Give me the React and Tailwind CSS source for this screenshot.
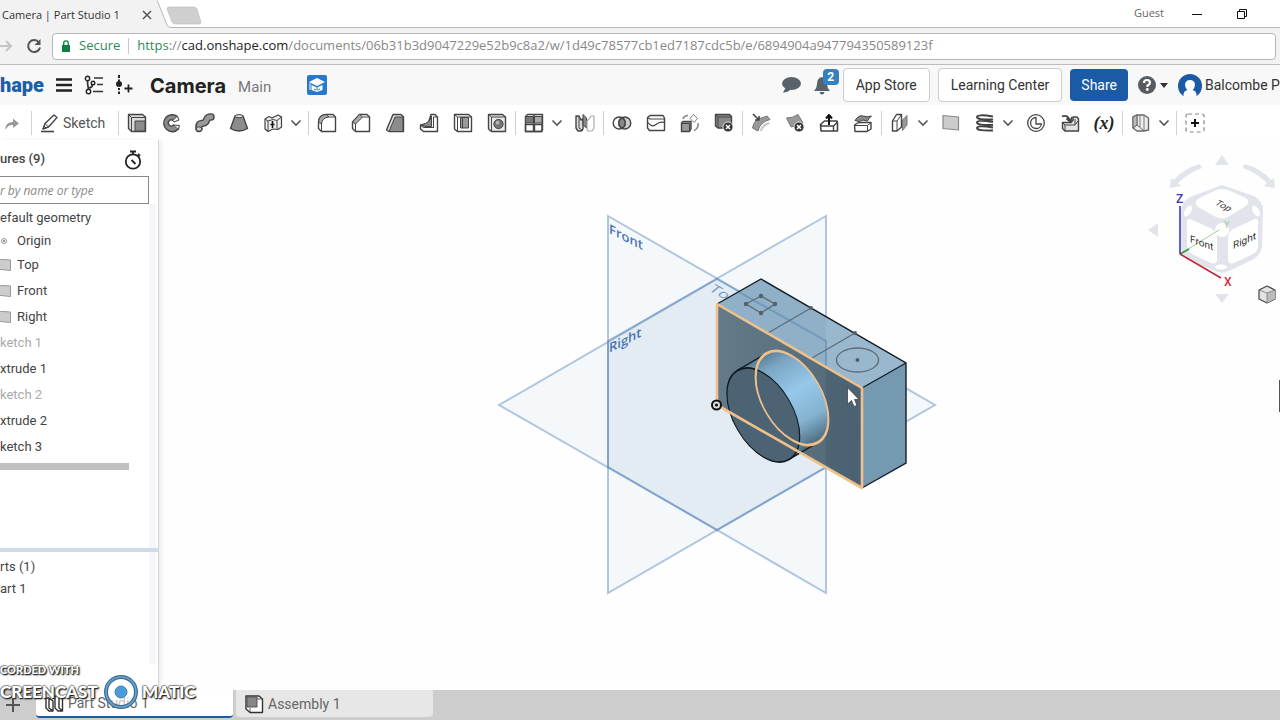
import React from "react";

const Icon = ({ children, className = "size-5" }) => (
  <svg viewBox="0 0 20 20" className={className} fill="none" stroke="#444" strokeWidth="1.4" strokeLinejoin="round" aria-hidden="true">
    {children}
  </svg>
);

const icons = {
  Extrude: (
    <Icon>
      <path d="M1.5 1.5H15.5L18.5 4V18.5H4.5L1.5 15.5Z" fill="#dcdcdc" />
      <path d="M1.5 1.5L4.5 4.5H18.5M4.5 4.5V18.5" strokeWidth="1" />
      <path d="M8 8H18V18H8Z" fill="#8c8c8c" strokeWidth="1" />
    </Icon>
  ),
  Revolve: (
    <Icon>
      <path d="M16.500 3.500A8.500 8.500 0 1 0 17.500 16L12.500 12A3 3 0 1 1 12 7.500Z" fill="#8c8c8c" />
      <path d="M16.500 3.500L18 7L13 9L12 7.500M12.500 12L18.500 12.500L17.500 16" fill="#eee" strokeWidth="1" />
    </Icon>
  ),
  Sweep: (
    <Icon>
      <path d="M4 15.500C3 8 8 12 10.500 9S11 4 16 4" strokeWidth="7.500" strokeLinecap="round" />
      <path d="M4 15.500C3 8 8 12 10.500 9S11 4 16 4" stroke="#999" strokeWidth="4.800" strokeLinecap="round" />
      <ellipse cx="4" cy="16" rx="2.800" ry="2.200" fill="#ccc" strokeWidth="1" />
    </Icon>
  ),
  Loft: (
    <Icon>
      <path d="M6 3L1.500 15.500Q10 20.500 18.500 15.500L14 3Z" fill="#8c8c8c" />
      <ellipse cx="10" cy="3.200" rx="4" ry="1.600" fill="#ddd" strokeWidth="1" />
    </Icon>
  ),
  Thicken: (
    <Icon>
      <path d="M2 6L6 3.500L9 5L15 2L18.500 4V14L15 16.500L10 16L5 18.500L2 16Z" fill="#eee" strokeWidth="1.200" />
      <path d="M2 6L5 8L10 6.500L14 7.500L18.500 4M5 8V18.500M14 7.500V16" strokeWidth="1" />
      <path d="M9.500 8V15M7.500 11.500H11.500" stroke="#111" strokeWidth="1.600" />
    </Icon>
  ),
  Fillet: (
    <Icon>
      <path d="M1.500 15.500V9Q2 2 9 1.500H16L18.500 4V18.500H4.500Z" fill="#fff" />
      <path d="M1.500 9Q2 2 9 1.500L12 4Q5 4.500 4.500 11Z" fill="#aaa" strokeWidth="1" />
      <path d="M4.500 18.500V11M12 4H18.500" strokeWidth="1" />
    </Icon>
  ),
  Chamfer: (
    <Icon>
      <path d="M1.500 15.500V9L8.500 1.500H16L18.500 4V18.500H4.500Z" fill="#fff" />
      <path d="M1.500 9L8.500 1.500L11.500 4L4.500 11Z" fill="#aaa" strokeWidth="1" />
      <path d="M4.500 18.500V11M11.500 4H18.500" strokeWidth="1" />
    </Icon>
  ),
  Draft: (
    <Icon>
      <path d="M1.500 17L8 1.500H16L18.500 4V18.500H4Z" fill="#ddd" />
      <path d="M4 18.500L10 4H18V18.500Z" fill="#8c8c8c" strokeWidth="1" />
    </Icon>
  ),
  Rib: (
    <Icon>
      <path d="M1.500 12L9 11L12 1.500H16L18.500 4V18.500H4.500L1.500 16Z" fill="#fff" />
      <path d="M3 11.500Q11 10 12.500 3V13.500H6Z" fill="#888" strokeWidth="1" />
      <path d="M1.500 12L5 14.500H14.500V4H18" strokeWidth="1.100" />
    </Icon>
  ),
  Shell: (
    <Icon>
      <path d="M1.500 1.500H15.500L18.500 4V18.500H4.500L1.500 16Z" fill="#fff" />
      <path d="M1.500 1.500L4.500 4H18.500M4.500 4V18.500" strokeWidth="1" />
      <path d="M7.500 4.500H15.500V15H7.500Z" fill="#999" strokeWidth="1" />
      <path d="M9.500 4.500V15" strokeWidth="1" />
    </Icon>
  ),
  Hole: (
    <Icon>
      <path d="M1.500 1.500H15.500L18.500 4V18.500H4.500L1.500 16Z" fill="#e8e8e8" />
      <path d="M1.500 1.500L4.500 4H18.500M4.500 4V18.500" strokeWidth="1" />
      <circle cx="11.500" cy="11" r="4.600" fill="#777" strokeWidth="1" />
      <circle cx="10.500" cy="9.800" r="1.800" fill="#bbb" stroke="none" />
    </Icon>
  ),
  "Linear pattern": (
    <Icon>
      <path d="M1.500 3.500L3.500 1.500H18.500V17L17 18.500H1.500Z" fill="#fff" />
      <path d="M1.500 3.500H9.500V10H1.500Z" fill="#777" strokeWidth="1" />
      <path d="M10.500 3.500H18V10H10.500Z" fill="#aaa" strokeWidth="1" />
      <path d="M1.500 11.500H9.500V18.500H1.500ZM10.500 11.500H18V18.500H10.500ZM10 1.500V18.500" />
    </Icon>
  ),
  Mirror: (
    <Icon>
      <path d="M1 3H4L6 7L8 6V16L6 18H3L1 15Z" fill="#ddd" />
      <path d="M4 3V15L8 18" strokeWidth="1" />
      <path d="M8 1.500L11.500 5V15L8 12Z" fill="#888" strokeWidth="1" />
      <path d="M12 8L14 6L16 3H19V15L17 18H13L12 16Z" stroke="#aaa" strokeWidth="1.200" />
    </Icon>
  ),
  Boolean: (
    <Icon>
      <circle cx="12.800" cy="10" r="6" fill="#ccc" />
      <circle cx="7.200" cy="10" r="6" />
      <path d="M10 4.700A6 6 0 0 1 10 15.300A6 6 0 0 1 10 4.700Z" fill="#888" />
    </Icon>
  ),
  Split: (
    <Icon>
      <path d="M1.500 4.500L4 2.500H17L18.500 5V17.500H3.500L1.500 15Z" fill="#fff" />
      <path d="M1.500 4.500L4 6H18M1.500 9Q6 15 10 11.500T18.500 9.500V6.500" strokeWidth="1.200" />
    </Icon>
  ),
  Transform: (
    <Icon>
      <path d="M1.500 10L3 8.500H11V16L9.500 18.500H1.500Z" fill="#999" />
      <path d="M1.500 10.500H9.500V18" strokeWidth="1" />
      <path d="M10 5.500L13.500 1.500L17.500 5.500L14 9.500Z" fill="#fff" stroke="#777" strokeWidth="1" />
      <path d="M3 6Q4 2.500 8 2.500M18 10Q19 15 14 17.500" stroke="#888" strokeWidth="1.600" />
    </Icon>
  ),
  "Delete part": (
    <Icon>
      <path d="M1.500 1.500H15.500L17.500 3.500V15H4L1.500 13Z" fill="#888" />
      <path d="M1.500 1.500L4 4H17.500M4 4V15" strokeWidth="1" />
      <circle cx="14" cy="14" r="5" fill="#333" stroke="#fff" strokeWidth=".8" />
      <path d="M12 12L16 16M16 12L12 16" stroke="#fff" strokeWidth="1.600" />
    </Icon>
  ),
  "Modify fillet": (
    <Icon>
      <path d="M1.500 15Q3 6 12 4.500L16 3L19 6.500Q9 9 7 18Z" fill="#999" stroke="#777" strokeWidth="1" />
      <path d="M10 18Q11 12 18.500 10" stroke="#ccc" strokeWidth="2.500" />
      <path d="M2 1L7.500 6.500M8 3V7H4" strokeWidth="1.600" />
    </Icon>
  ),
  "Delete face": (
    <Icon>
      <path d="M1.500 5Q8 5 13 1.500L18 10Q13 13 6 14Z" fill="#999" stroke="#777" strokeWidth="1" />
      <circle cx="14" cy="14" r="5" fill="#333" stroke="#fff" strokeWidth=".8" />
      <path d="M12 12L16 16M16 12L12 16" stroke="#fff" strokeWidth="1.600" />
    </Icon>
  ),
  "Move face": (
    <Icon>
      <path d="M1.500 11.500L5.500 8H18L18.500 10V18H2Z" fill="#fff" strokeWidth="1.600" />
      <path d="M1.500 11.500L3 13H14.500L18.500 9M14.500 13V18" />
      <path d="M10 12V3M7 5.500L10 2L13 5.500" stroke="#111" strokeWidth="2" />
    </Icon>
  ),
  "Replace face": (
    <Icon>
      <path d="M1.500 12L5.500 9.500H18V16L14 18.500H2Z" fill="#fff" />
      <path d="M1.500 12.500H14.500L18 9.500M14.500 12.500V18" strokeWidth="1" />
      <path d="M2 7.500Q6 1.500 10 3T18.500 3Q16 5 14.500 8Q10 6 6 8.500Z" fill="#888" strokeWidth="1" />
    </Icon>
  ),
  "Offset surface": (
    <Icon>
      <path d="M2.500 8L6.500 1.500H11.500V14L7 18H2.500Z" fill="#fff" />
      <path d="M7 8L11.500 1.500M7 8V18M2.500 8H7" strokeWidth="1" />
      <path d="M12.500 7L17 2.500V12L12.500 17.500Z" fill="#999" stroke="#777" strokeWidth="1" />
    </Icon>
  ),
  Plane: (
    <Icon>
      <path d="M2 2.500L17.500 4V17L2 15.500Z" fill="#ccc" stroke="#888" strokeWidth="1.200" />
    </Icon>
  ),
  Helix: (
    <Icon>
      <path d="M18 3.500Q2 1 2 4T18 6.500M18 9Q2 6.500 2 9.500T18 12M18 14.500Q2 12 2 15T18 17.500" strokeWidth="2" />
    </Icon>
  ),
  Curve: (
    <Icon>
      <circle cx="10" cy="10" r="8.300" strokeWidth="1.300" />
      <path d="M10 4.500A5.500 5.500 0 1 0 15.500 11H10Z" strokeWidth="1.300" />
    </Icon>
  ),
  Import: (
    <Icon>
      <path d="M2.500 9.500H11L13 7V4H17L18.500 6V18H5L2.500 15.500Z" fill="#e4e4e4" />
      <path d="M2.500 9.500L5 12H15V6M5 12V18M15 12L18 8" strokeWidth="1" />
      <path d="M2 3.500Q8 1 10 8M6.500 5.500L10.500 9L12 4" strokeWidth="1.800" />
    </Icon>
  ),
  Variable: <span className="font-['Liberation_Serif',serif] text-lg font-bold italic text-[#222]">(x)</span>,
  "Section view": (
    <Icon>
      <path d="M2 4L6 2H13L17.500 5V17L13 18H6L2 15Z" fill="#eee" stroke="#666" />
      <path d="M6 2V12L2 15M6 12L13 18" stroke="#666" strokeWidth="1" />
      <path d="M2 4L6 2V12L2 15Z" fill="#bbb" stroke="#666" strokeWidth="1" />
      <path d="M9 2V14M13 2V18" stroke="#777" strokeWidth="1" />
    </Icon>
  ),
  "Add custom features": (
    <Icon>
      <rect x="1" y="1" width="18" height="18" rx="2" stroke="#888" strokeWidth="1.200" strokeDasharray="4 3" />
      <path d="M10 6V14M6 10H14" stroke="#111" strokeWidth="2" />
    </Icon>
  ),
};

const toolGroups = [
  ["Extrude", "Revolve", "Sweep", "Loft", "Thicken", "v"],
  ["Fillet", "Chamfer", "Draft", "Rib", "Shell", "Hole"],
  ["Linear pattern", "v", "Mirror"],
  ["Boolean", "Split", "Transform", "Delete part"],
  ["Modify fillet", "Delete face", "Move face", "Replace face"],
  ["Offset surface", "v", "Plane", "Helix", "v", "Curve", "Import", "Variable"],
  ["Section view", "v"],
  ["Add custom features"],
];

const Divider = () => <span className="mx-px h-6 w-px shrink-0 bg-[#d2d2d2]" />;

function BrowserChrome() {
  return (
    <>
      <div className="flex h-7 items-stretch bg-white font-['Open_Sans',sans-serif]">
        <div className="flex w-[157px] items-center justify-between bg-[#f2f2f2] pl-0.5 pr-1 pt-0.5">
          <span className="whitespace-nowrap text-[11px] text-[#333]">Camera | Part Studio 1</span>
          <button aria-label="Close tab">
            <svg viewBox="0 0 12 12" className="size-3" stroke="#555" strokeWidth="1.5">
              <path d="M2 2L10 10M10 2L2 10" />
            </svg>
          </button>
        </div>
        <svg viewBox="0 0 46 28" className="h-7 w-[46px]" aria-hidden="true">
          <path d="M0 0L11 26Q12 28 14 28H0Z" fill="#f2f2f2" />
          <path d="M0 0L10 25Q11 27.500 14 27.500H46" fill="none" stroke="#b8b8b8" />
          <path d="M12 7H37Q39 7 40 9L44 22Q44 24 42 24H18Q16 24 15 22L10 9Q10 7 12 7Z" fill="#cfcfcf" stroke="#bbb" strokeWidth=".6" />
        </svg>
        <div className="flex flex-1 items-center justify-end gap-[27px] border-b border-[#b8b8b8] pr-8">
          <span className="text-[11px] text-[#666]">Guest</span>
          <button aria-label="Minimize">
            <svg viewBox="0 0 12 12" className="size-3" stroke="#111">
              <path d="M1 6.500H11" />
            </svg>
          </button>
          <button aria-label="Restore" className="pl-1.5">
            <svg viewBox="0 0 12 12" className="size-3" fill="none" stroke="#111">
              <path d="M1.500 3.500H8.500V10.500H1.500ZM3.500 3V1.500H10.500V8.500H9" />
            </svg>
          </button>
        </div>
      </div>
      <div className="flex h-[37px] items-center border-b border-[#bdbdbd] bg-[#f2f2f2] pb-1 pr-1 pt-1 font-['Open_Sans',sans-serif]">
        <button aria-label="Forward" className="w-[22px]">
          <svg viewBox="0 0 22 16" className="h-4 w-[22px]" fill="none" stroke="#c4c4c4" strokeWidth="2">
            <path d="M0 8H11M6 3L11 8L6 13" />
          </svg>
        </button>
        <button aria-label="Reload" className="mr-2.5 pl-1">
          <svg viewBox="0 0 16 16" className="size-4" fill="none" stroke="#555" strokeWidth="2">
            <path d="M13 4.500A6 6 0 1 0 14 9.500" />
            <path d="M14.500 1V7H8.500Z" fill="#555" stroke="none" />
          </svg>
        </button>
        <div className="flex h-[27px] min-w-0 flex-1 items-center whitespace-nowrap rounded-sm border border-[#b5b5b5] bg-white pl-2 text-[13px]">
          <svg viewBox="0 0 10 12" className="mr-2 h-3 w-2.5" aria-hidden="true">
            <path d="M1 5H9V12H1Z" fill="#0b8043" />
            <path d="M2.700 5V3.200a2.300 2.300 0 0 1 4.600 0V5" fill="none" stroke="#0b8043" strokeWidth="1.300" />
          </svg>
          <span className="text-[#2e8b57]">Secure</span>
          <span className="mx-2 h-4 w-px bg-[#c8c8c8]" />
          <span className="text-[#888]">
            <span className="text-[#2e8b57]">https</span>://<span className="text-[#222]">cad.onshape.com</span>
            /documents/06b31b3d9047229e52b9c8a2/w/1d49c78577cb1ed7187cdc5b/e/6894904a947794350589123f
          </span>
        </div>
      </div>
    </>
  );
}

function Header() {
  return (
    <header className="flex h-10 items-center justify-between bg-[#f8f8f8] text-sm text-[#333]">
      <div className="flex items-center">
        <a href="#home" className="flex w-11 justify-end whitespace-nowrap text-xl leading-6 font-black text-[#1b5faa]">
          shape
        </a>
        <button aria-label="Menu" className="ml-3">
          <svg viewBox="0 0 16 16" className="size-4" stroke="#222" strokeWidth="2.600">
            <path d="M0 2.500H16M0 8H16M0 13.500H16" />
          </svg>
        </button>
        <button aria-label="Versions and history" className="ml-3">
          <Icon>
            <circle cx="3.500" cy="3.500" r="2.200" stroke="#222" />
            <circle cx="4.500" cy="16.500" r="2.200" stroke="#222" />
            <circle cx="9" cy="8" r="1.800" stroke="#222" />
            <path d="M3.500 6Q3.500 10 4.500 14M8.500 10Q8 12.500 5 13M10 3H19M13 9.500H19M9 16.500H19" stroke="#333" strokeWidth="1.700" />
          </Icon>
        </button>
        <button aria-label="Create version" className="ml-2.5">
          <Icon>
            <circle cx="5" cy="9" r="3" fill="#222" stroke="none" />
            <path d="M5 0V3M5 4.500V6M5 13V15M5 16.500V19" stroke="#222" strokeWidth="2" />
            <path d="M14.500 9.500V17.500M10.500 13.500H18.500" stroke="#222" strokeWidth="1.800" />
          </Icon>
        </button>
        <h1 className="ml-4 pt-0.5 font-['Inter',sans-serif] text-xl leading-6 font-bold text-[#222]">Camera</h1>
        <span className="ml-3 pt-1.5 text-[15px] text-[#777]">Main</span>
        <button aria-label="Education plan" className="ml-9">
          <svg viewBox="0 0 20 20" className="size-5">
            <rect width="20" height="20" rx="2" fill="#2878cc" />
            <path d="M10 3L18 7L10 11L2 7Z" fill="#fff" />
            <path d="M4.500 10L10 12.500L15.500 10V15L10 17L4.500 15Z" fill="#fff" />
            <path d="M3 8V15" stroke="#fff" />
            <path d="M10 12V15.500M7 14L9 15M13 14L11 15" stroke="#2878cc" />
          </svg>
        </button>
      </div>
      <div className="flex items-center">
        <button aria-label="Comments">
          <svg viewBox="0 0 20 18" className="h-[18px] w-5" fill="#58626b">
            <ellipse cx="10.500" cy="7.500" rx="9.500" ry="6.500" />
            <path d="M5 11L2 16.500Q7 16.500 10 13Z" />
          </svg>
        </button>
        <button aria-label="Notifications" className="relative ml-3 mr-3">
          <svg viewBox="0 0 18 20" className="h-5 w-[18px]" fill="#58626b">
            <path d="M9 2Q14 3 14 9Q14 13 17 16H1Q4 13 4 9Q4 3 9 2ZM6.500 17H11.500Q11 19.500 9 19.500T6.500 17Z" />
          </svg>
          <span className="absolute -top-1.5 left-2.5 flex h-4 w-4 items-center justify-center rounded-sm bg-[#3580c4] text-xs font-bold text-white">2</span>
        </button>
        <button className="mr-2 h-[34px] rounded border border-[#ccc] bg-white px-3">App Store</button>
        <button className="mr-2 h-[34px] rounded border border-[#ccc] bg-white px-3">Learning Center</button>
        <button className="mr-2.5 h-8 rounded-sm bg-[#1b5aa5] px-[11px] text-white">Share</button>
        <button aria-label="Help" className="flex items-center gap-1">
          <svg viewBox="0 0 18 18" className="size-[18px]">
            <circle cx="9" cy="9" r="9" fill="#555b60" />
            <path d="M6 7Q6 4 9 4T12 6.800Q12 8.300 9.500 9.500V11" fill="none" stroke="#fff" strokeWidth="2.200" />
            <circle cx="9.300" cy="13.500" r="1.400" fill="#fff" />
          </svg>
          <svg viewBox="0 0 8 5" className="h-[5px] w-2" fill="#333">
            <path d="M0 0H8L4 5Z" />
          </svg>
        </button>
        <button className="ml-2.5 flex items-center gap-[3px]">
          <svg viewBox="0 0 24 22" className="h-[22px] w-6">
            <circle cx="12" cy="12" r="12" fill="#1b5aa5" />
            <path d="M5.500 22Q5 17 9.500 16Q7 14 7 10.500Q7.500 6 12 6T17 10.500Q17 14 14.500 16Q19 17 18.500 22Z" fill="#fff" />
          </svg>
          <span className="w-[75px] overflow-hidden whitespace-nowrap text-left">Balcombe Ph</span>
        </button>
      </div>
    </header>
  );
}

function Toolbar() {
  return (
    <div role="toolbar" className="flex h-[35px] items-center bg-white">
      <button aria-label="Redo" className="w-[30px] pl-1">
        <svg viewBox="0 0 16 16" className="size-4">
          <path d="M1.500 15Q1 7 9 7V3.500L15 8.500L9 13V10Q4 9.500 1.500 15Z" fill="#999" />
        </svg>
      </button>
      <Divider />
      <button className="flex w-[84px] items-center gap-[3px] pl-[7px] text-sm text-[#555]">
        <Icon>
          <path d="M3 16L5 10.500L14 2L17 4.500L8.500 14Z" fill="#fff" />
          <path d="M5 10.500L8.500 14M3 16L4 13L6 15Z" strokeWidth="1" />
          <path d="M1 18.500H14" strokeWidth="1.600" />
        </Icon>
        Sketch
      </button>
      {toolGroups.map((group, g) => (
        <React.Fragment key={g}>
          <Divider />
          {group.map((name, i) =>
            name === "v" ? (
              <button key={i} aria-label="More tools" className="flex w-[17px] shrink-0 justify-start">
                <svg viewBox="0 0 12 8" className="h-2 w-3" fill="none" stroke="#555" strokeWidth="1.600">
                  <path d="M1.500 1.500L6 6L10.500 1.500" />
                </svg>
              </button>
            ) : (
              <button key={i} aria-label={name} className="flex w-[34px] shrink-0 justify-center">
                {icons[name]}
              </button>
            )
          )}
        </React.Fragment>
      ))}
    </div>
  );
}

const features = [
  { name: "ketch 1", dim: true },
  { name: "xtrude 1" },
  { name: "ketch 2", dim: true },
  { name: "xtrude 2" },
  { name: "ketch 3" },
];

function FeaturePanel() {
  return (
    <aside className="relative z-10 flex w-[159px] shrink-0 flex-col border-r border-[#d4d4d4] bg-white text-[13px] text-[#444] shadow-[2px_0_4px_rgba(0,0,0,0.08)]">
      <section className="flex h-[408px] flex-col">
        <div className="flex h-9 items-center justify-between pr-4 pt-1">
          <h2 className="pb-0.5 font-medium">ures (9)</h2>
          <button aria-label="Feature timing">
            <svg viewBox="0 0 18 20" className="h-5 w-[18px]" fill="none" stroke="#222" strokeWidth="1.800">
              <circle cx="9" cy="11.500" r="7.200" />
              <path d="M6 1.500H12M9 1.500V4M14 4L16 6" />
              <path d="M7.500 10L11.500 14" />
            </svg>
          </button>
        </div>
        <input
          aria-label="Filter by name or type"
          placeholder="r by name or type"
          className="mr-[9px] h-7 border border-l-0 border-[#888] bg-white font-['Open_Sans',sans-serif] text-xs italic placeholder:text-[#888]"
        />
        <div className="mr-0.5 flex-1 border-r-[7px] border-[#f6f6fa]">
          <p className="flex h-[26px] items-end pb-1 leading-4">efault geometry</p>
          <ul>
            <li className="flex h-[22px] items-center gap-2">
              <svg viewBox="0 0 10 10" className="h-2.5 w-[9px]" fill="none" stroke="#888">
                <circle cx="4.500" cy="5" r="2.800" />
                <circle cx="4.500" cy="5" r=".8" fill="#666" />
              </svg>
              Origin
            </li>
            {["Top", "Front", "Right"].map((p) => (
              <li key={p} className="flex h-[26px] items-center gap-1.5">
                <svg viewBox="0 0 11 12" className="h-3 w-[11px]" aria-hidden="true">
                  <path d="M-4 0L10.500 1V11.500L-4 10Z" fill="#ccc" stroke="#999" />
                </svg>
                {p}
              </li>
            ))}
            {features.map((f) => (
              <li key={f.name} className={f.dim ? "flex h-[26px] items-center text-[#aaa]" : "flex h-[26px] items-center"}>
                {f.name}
              </li>
            ))}
          </ul>
          <div className="mr-5 mt-[3px] h-[7px] bg-[#c0c0c0]" />
        </div>
      </section>
      <div className="h-1 bg-[#cddce6]" />
      <section className="mr-0.5 h-28 border-r-[7px] border-[#f6f6fa] pt-1">
        <h2 className="flex h-[22px] items-center">rts (1)</h2>
        <p className="flex h-[22px] items-center">art 1</p>
      </section>
    </aside>
  );
}

function Model() {
  return (
    <svg viewBox="159 140 1121 550" className="h-full w-full" fill="none" role="img" aria-label="Camera model">
      <defs>
        <linearGradient id="barrel" gradientUnits="userSpaceOnUse" x1="752" y1="362" x2="803" y2="451">
          <stop offset="0" stopColor="#5d7f95" />
          <stop offset=".14" stopColor="#7ba6c3" />
          <stop offset=".45" stopColor="#96c8ea" />
          <stop offset=".75" stopColor="#84b2d0" />
          <stop offset=".92" stopColor="#5f8299" />
          <stop offset="1" stopColor="#4b687b" />
        </linearGradient>
        <linearGradient id="face" gradientUnits="userSpaceOnUse" x1="717" y1="0" x2="862" y2="0">
          <stop offset="0" stopColor="#647a88" />
          <stop offset=".74" stopColor="#566d7c" />
          <stop offset=".76" stopColor="#4c6473" />
          <stop offset="1" stopColor="#4a6271" />
        </linearGradient>
      </defs>
      <g fill="#1f6296" fillOpacity=".04" stroke="#4a7cb8" strokeOpacity=".42" strokeWidth="2">
        <path d="M608 216L826 341V593L608 467Z" />
        <path d="M826 216L608 341V593L826 467Z" />
        <path d="M717 279L935 405L717 530L499 405Z" />
      </g>
      <g fontFamily="Open Sans, sans-serif" fontSize="13" fontWeight="600" fill="#4a74b4">
        <text transform="translate(609 233) skewY(27)">Front</text>
        <text transform="translate(609 353) skewY(-27)">Right</text>
        <text transform="matrix(.87 .5 -.6 .5 708 290)" fontSize="17" fontWeight="400" fill="#7c98c4">Top</text>
      </g>
      <path d="M717 304L761 279L906 363L862 388Z" fill="#9ab8cd" />
      <path d="M717 304L761 279L826 317V367Z" fill="#8fb0c7" />
      <path d="M862 388L906 363V463L862 488Z" fill="#7599b1" />
      <path d="M717 304L862 388V488L717 405Z" fill="url(#face)" />
      <path d="M739 292L826 341V367" stroke="#5482b0" strokeOpacity=".5" strokeWidth="2" />
      <path d="M717 304L761 279L906 363V463L862 488M862 388L906 363" stroke="#151d24" strokeWidth="1.400" />
      <g stroke="#5f6e79" strokeWidth="1.400">
        <path d="M746 304L761 296L775 304L761 313ZM811 308L768 333M855 333L812 358" />
        <ellipse cx="857.500" cy="360" rx="21" ry="12" />
      </g>
      <g fill="#56606a">
        <circle cx="746" cy="304" r="2.200" />
        <circle cx="761" cy="296" r="2.200" />
        <circle cx="775" cy="304" r="2.200" />
        <circle cx="761" cy="313" r="2.200" />
        <circle cx="811" cy="308" r="2" />
        <circle cx="855" cy="333" r="2" />
        <circle cx="857.500" cy="360" r="2" />
      </g>
      <path d="M737.300 370.400L766.300 353.400A51.400 29.700 60 0 1 817.700 442.600L788.700 459.600Z" fill="url(#barrel)" />
      <path d="M766.300 353.400L737.300 370.400M788.700 459.600L817.700 442.600" stroke="#151d24" strokeWidth="1.400" />
      <circle r="42" transform="matrix(.866 .5 0 1 763.300 415)" fill="#4b6372" stroke="#111a20" strokeWidth="1.400" />
      <circle r="42" transform="matrix(.866 .5 0 1 792 398)" stroke="#efc08c" strokeWidth="2.400" />
      <path d="M717 304L862 388V488L717 405Z" stroke="#efc08c" strokeWidth="2.600" strokeLinejoin="round" />
      <circle cx="716.500" cy="405" r="4.500" fill="#ddd" stroke="#111" strokeWidth="2" />
      <circle cx="716.500" cy="405" r="1.600" fill="#111" />
      <path d="M847.500 387.500V404L851.500 400.500L854 406.500L857 405.500L854.500 399.500H859Z" fill="#fff" stroke="#333" strokeWidth=".7" />
    </svg>
  );
}

function ViewCube() {
  return (
    <svg viewBox="1145 150 135 160" className="absolute right-0 top-2.5 h-40 w-[135px]" fill="none" role="img" aria-label="View cube">
      <g fill="#e2e4eb">
        <path d="M1222 155L1229 165H1215ZM1222 303L1229 294H1215ZM1148 230L1158 223V237Z" />
        <path d="M1170 188L1171 178L1174 180Q1184 168 1200 164L1202 168Q1188 173 1178 183L1181 186ZM1275 188L1274 178L1271 180Q1261 168 1244 164L1243 168Q1257 173 1267 183L1264 186Z" />
        <path d="M1222 185L1254 196Q1264 202 1263 212L1262 248Q1260 256 1252 260L1229 271Q1222 274 1215 271L1188 260Q1182 256 1181 248V212Q1181 202 1190 197Z" />
      </g>
      <path d="M1198 199L1216 190Q1222 188 1228 190L1246 198Q1251 202 1246 206L1228 217Q1222 220 1216 217L1198 207Q1193 203 1198 199Z" fill="#fff" />
      <path d="M1190 219L1212 229Q1217 232 1217 238V259Q1217 265 1211 263L1192 254Q1187 251 1187 246V223Q1187 218 1190 219Z" fill="#fff" />
      <path d="M1255 219L1233 229Q1228 232 1228 238V259Q1228 265 1234 263L1253 254Q1258 251 1258 246V223Q1258 218 1255 219Z" fill="#fff" />
      <g fill="#fff">
        <circle cx="1222" cy="230" r="7" />
        <ellipse cx="1188" cy="211" rx="3" ry="6" transform="rotate(30 1188 211)" />
        <ellipse cx="1256" cy="211" rx="3" ry="6" transform="rotate(-30 1256 211)" />
        <ellipse cx="1221" cy="267" rx="6" ry="2.500" />
      </g>
      <path d="M1180 254L1219 230" stroke="#9fd09f" />
      <path d="M1180 254L1189 249" stroke="#2c9a3c" strokeWidth="1.600" />
      <path d="M1180 206V254" stroke="#4238b8" strokeWidth="1.600" />
      <path d="M1180 254L1221 278" stroke="#c02838" strokeWidth="1.600" />
      <g fontFamily="Roboto, sans-serif" fontSize="12" fontWeight="500">
        <text x="1176" y="203" fill="#4038c0">Z</text>
        <text x="1224" y="286" fill="#d03040">X</text>
        <text x="1224" y="228" fontSize="9" fill="#a5cfa5">Y</text>
      </g>
      <g fontFamily="Roboto, sans-serif" fontSize="10" fill="#333">
        <text transform="translate(1190 242) skewY(20)">Front</text>
        <text transform="translate(1233 249) skewY(-24)">Right</text>
        <text transform="matrix(.87 .45 -.7 .6 1214 204)">Top</text>
      </g>
      <path d="M1259 290L1267 286L1275 290V299L1267 303L1259 299Z" fill="#e4e4e4" stroke="#444" strokeWidth="1.200" strokeLinejoin="round" />
      <path d="M1267 293V303L1275 299V290Z" fill="#bbb" />
      <path d="M1259 290L1267 293L1275 290M1267 293V303" stroke="#777" strokeWidth=".8" />
    </svg>
  );
}

function BottomTabs() {
  return (
    <nav className="flex h-[30px] items-start bg-[#cdcdcd] text-sm text-[#666]">
      <button aria-label="Insert new tab" className="flex h-full w-9 items-center pl-1.5">
        <svg viewBox="0 0 14 14" className="size-3.5" stroke="#555" strokeWidth="2">
          <path d="M7 0V14M0 7H14" />
        </svg>
      </button>
      <button className="mr-[3px] flex h-7 w-[197px] items-center gap-1 rounded-b border-b-2 border-[#1b5aa5] bg-white pl-2">
        <Icon>
          <path d="M2 5H5L9 8V18H5L2 15ZM5 5V15L9 18M11 3H15L18.500 5V18H14L11 15ZM15 3V15L18.500 18" stroke="#333" />
        </Icon>
        Part Studio 1
      </button>
      <button className="flex h-[27px] w-[197px] items-center gap-1 rounded-b bg-[#e7e7e7] pl-2">
        <Icon>
          <path d="M2 2H15L18.500 5V18.500H6L2 15Z" fill="#fff" stroke="#333" />
          <path d="M3 3H13V13H3Z" fill="#888" stroke="#555" strokeWidth="1" />
          <path d="M6 18.500V14M13 5H18" stroke="#555" strokeWidth="1" />
        </Icon>
        Assembly 1
      </button>
    </nav>
  );
}

function Watermark() {
  return (
    <div className="pointer-events-none absolute bottom-2.5 left-0 z-20 font-['Lato',sans-serif] font-black text-white [text-shadow:1px_1px_1px_#222,-1px_0_1px_#777,0_-1px_1px_#888,1px_1px_2px_#333]">
      <p className="-mb-1 text-[11px] leading-4">CORDED WITH</p>
      <div className="flex items-center gap-[3px] text-[17px] leading-5">
        <span className="w-[100px] whitespace-nowrap">CREENCAST</span>
        <svg viewBox="0 0 36 36" className="size-9" fill="none" aria-hidden="true">
          <circle cx="18" cy="18" r="13.500" fill="#fff" fillOpacity=".6" />
          <circle cx="18" cy="18" r="15" stroke="#3d6d94" strokeWidth="4" />
          <circle cx="18" cy="18" r="15" stroke="#6ba3cf" strokeWidth="1.500" />
          <circle cx="18" cy="18" r="6" fill="#4a9bd8" stroke="#3a7fb5" />
        </svg>
        <span>MATIC</span>
      </div>
    </div>
  );
}

export default function App() {
  return (
    <div className="relative flex min-h-screen flex-col overflow-hidden bg-white font-['Roboto',sans-serif]">
      <BrowserChrome />
      <Header />
      <Toolbar />
      <div className="flex flex-1">
        <FeaturePanel />
        <main className="relative min-w-0 flex-1 bg-[#fefefe]">
          <div className="absolute inset-0">
            <Model />
          </div>
          <ViewCube />
          <span className="absolute right-0 top-60 h-8 w-px bg-[#555]" />
        </main>
      </div>
      <BottomTabs />
      <Watermark />
    </div>
  );
}
